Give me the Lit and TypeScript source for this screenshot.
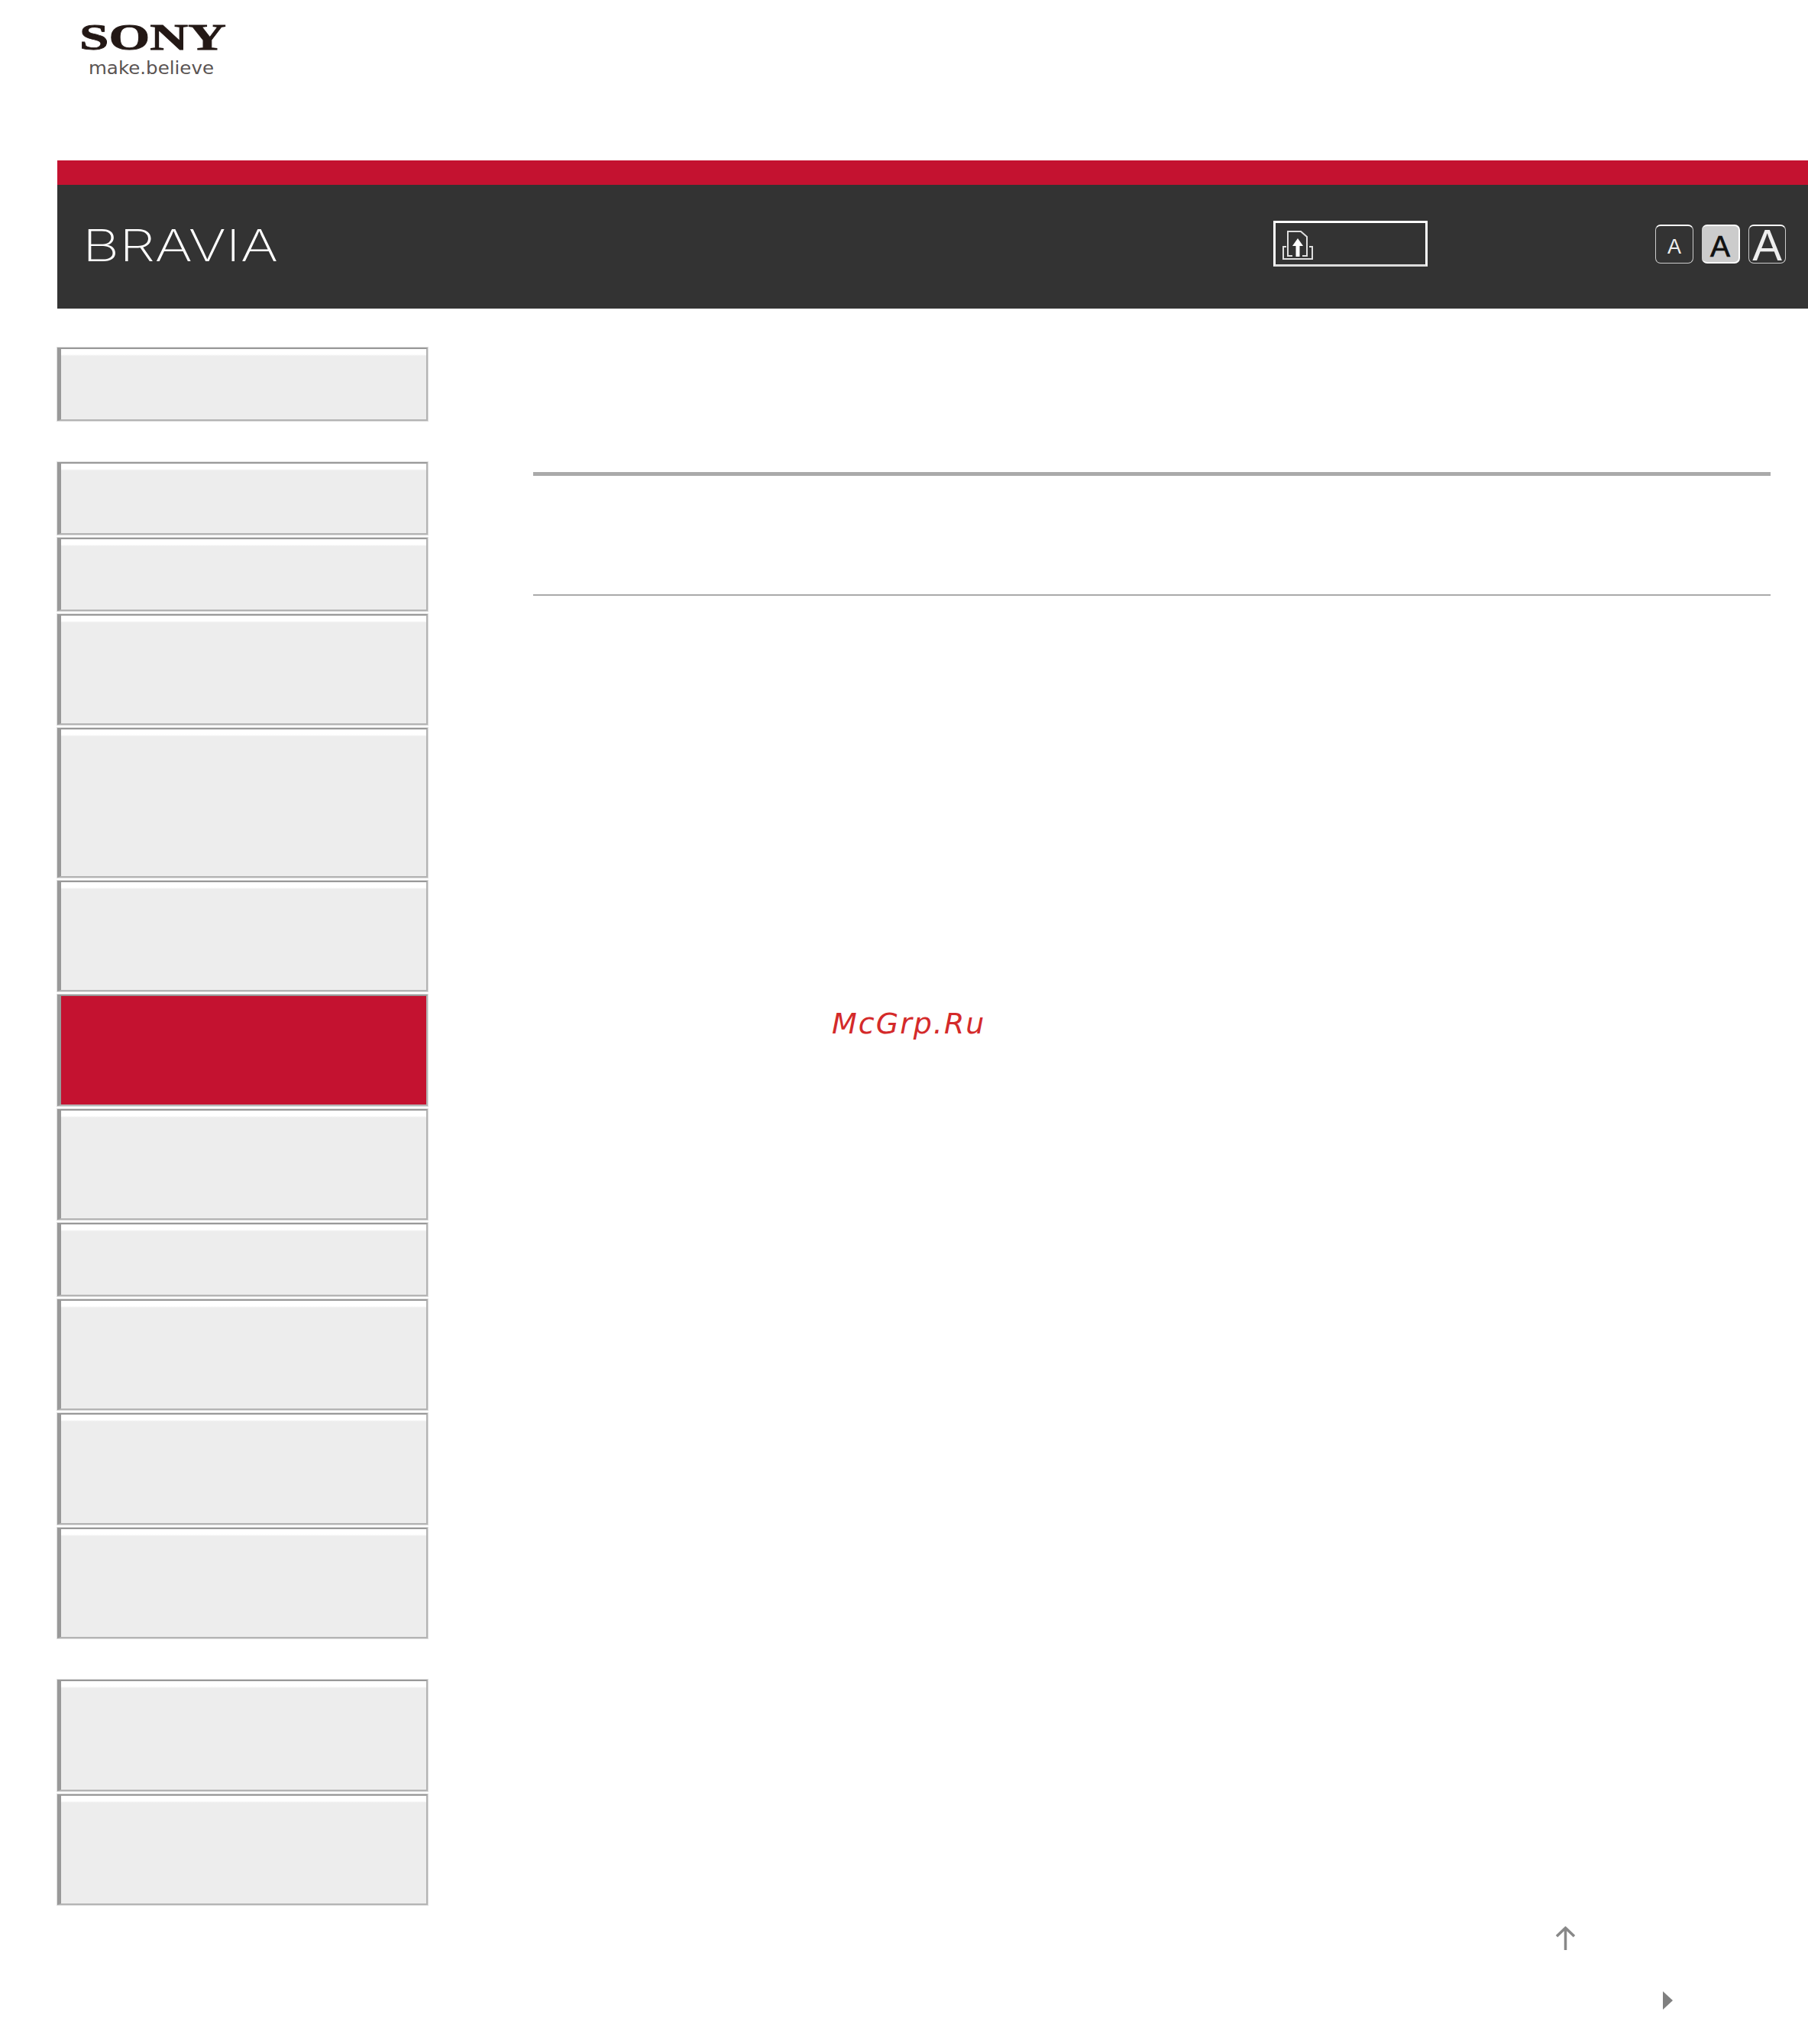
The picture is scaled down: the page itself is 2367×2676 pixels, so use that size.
import { LitElement, html, css, svg } from "lit";
import { customElement } from "lit/decorators.js";

const GROUPS: { h: number; active?: boolean }[][] = [
  [{ h: 97.5 }],
  [
    { h: 97.5 }, { h: 97.5 }, { h: 147.5 }, { h: 197.5 }, { h: 147.5 },
    { h: 147.5, active: true }, { h: 147.5 }, { h: 97.5 }, { h: 147.5 }, { h: 147.5 }, { h: 147.5 },
  ],
  [{ h: 147.5 }, { h: 147 }],
];

@customElement("app-root")
export class AppRoot extends LitElement {
  static styles = css`
    :host { display: block; width: 2367px; height: 2676px; background: #fff; overflow: hidden; font-family: "Liberation Sans", sans-serif; }
    .logo { height: 210px; padding-left: 100px; box-sizing: border-box; }
    .logo svg { display: block; }
    .banner { margin-left: 75px; }
    .red { height: 32px; background: #c41230; }
    .dark { height: 162px; background: #333; display: flex; align-items: center; padding-left: 33px; box-sizing: border-box; }
    .brand { display: block; flex: none; overflow: visible; }
    .print { margin-left: 1217px; width: 202px; height: 60px; box-sizing: border-box; border: 3px solid #fff; border-bottom-color: #ddd; margin-top: -8px; display: flex; align-items: center; padding-left: 8px; flex: none; }
    .print svg { margin-top: 4px; flex: none; }
    .sizes { margin-left: 298px; margin-top: -7px; display: flex; gap: 11px; align-items: center; flex: none; }
    .sz { box-sizing: border-box; width: 50px; height: 51px; border: 1px solid #ccc; border-top: 2px solid #fff; border-radius: 7px; display: flex; align-items: center; justify-content: center; color: #eee; line-height: 1; }
    .sz.s { font-size: 27px; padding-top: 7px; }
    .sz.m { background: #ccc; color: #111; font-size: 39px; padding-top: 5px; border: 0 solid #fff; border-width: 2px 2px 2px 0; -webkit-text-stroke: 0.7px #111; }
    .sz.l { font-size: 58px; padding-top: 2px; width: 49px; }
    .body { display: flex; padding-top: 50px; }
    .side { margin-left: 74px; width: 487px; flex: none; display: flex; flex-direction: column; gap: 52px; }
    .group { display: flex; flex-direction: column; gap: 2px; }
    .item { box-sizing: border-box; border: 1px solid #ddd; background: #ededed; }
    .in { box-sizing: border-box; height: 100%; border-style: solid; border-color: #999 #b4b4b4 #b4b4b4 #999; border-width: 2px 2px 2px 5px; background: linear-gradient(#fff 0, #fff 7px, #ededed 9px); }
    .item.active .in { background: #c41230; }
    .main { flex: none; margin-left: 137px; width: 1620px; padding-top: 164px; position: relative; height: 2222px; box-sizing: border-box; }
    .rule1 { height: 5px; background: #aaa; }
    .rule2 { height: 2px; background: #aaa; margin-top: 155px; }
    .stamp { position: absolute; left: 391px; top: 864px; font: italic 38px "DejaVu Sans", sans-serif; letter-spacing: 2px; color: #d42a2a; white-space: nowrap; }
    .up { position: absolute; left: 1338px; top: 2068px; }
    .next { position: absolute; left: 1479px; top: 2153px; }
  `;

  private logo() {
    return html`<svg width="220" height="110" viewBox="0 0 220 110">
      <text x="4" y="65" font-family="Liberation Serif" font-weight="700" font-size="48" fill="#231815" stroke="#231815" stroke-width=".8" textLength="192" lengthAdjust="spacingAndGlyphs">SONY</text>
      <text x="16" y="97" font-family="DejaVu Sans" font-size="23" fill="#5a5453" textLength="164" lengthAdjust="spacingAndGlyphs">make.believe</text>
    </svg>`;
  }

  private brand() {
    return html`<svg class="brand" width="342" height="64" viewBox="0 0 342 64">
      <text x="0" y="51" font-family="Inter" font-weight="200" font-size="58" fill="#fff" textLength="256" lengthAdjust="spacingAndGlyphs">BRAVIA</text>
    </svg>`;
  }

  private printIcon() {
    return html`<svg width="42" height="42" viewBox="0 0 42 42" fill="none" stroke="#ddd" stroke-width="2">
      ${svg`<path d="M14 35H8V3H25L33 10V35H27"/><path d="M6 23H2V39H40V23H36"/><path d="M21 36V17" stroke-width="5" stroke="#fff"/><path d="M14 22L21 12L28 22Z" fill="#fff" stroke="none"/>`}
    </svg>`;
  }

  render() {
    return html`
      <div class="logo">${this.logo()}</div>
      <div class="banner">
        <div class="red"></div>
        <div class="dark">
          ${this.brand()}
          <div class="print">${this.printIcon()}</div>
          <div class="sizes">
            <div class="sz s">A</div><div class="sz m">A</div><div class="sz l">A</div>
          </div>
        </div>
      </div>
      <div class="body">
        <div class="side">
          ${GROUPS.map((g) => html`<div class="group">
            ${g.map((i) => html`<div class="item ${i.active ? "active" : ""}" style="height:${i.h}px"><div class="in"></div></div>`)}
          </div>`)}
        </div>
        <div class="main">
          <div class="rule1"></div>
          <div class="rule2"></div>
          <div class="stamp">McGrp.Ru</div>
          <svg class="up" width="27" height="31" viewBox="0 0 27 31" fill="none" stroke="#888" stroke-width="3.5"><path d="M13.5 31V2M2 13L13.5 2L25 13"/></svg>
          <svg class="next" width="13" height="24" viewBox="0 0 13 24"><path d="M0 0L13 12L0 24Z" fill="#808080"/></svg>
        </div>
      </div>
    `;
  }
}
